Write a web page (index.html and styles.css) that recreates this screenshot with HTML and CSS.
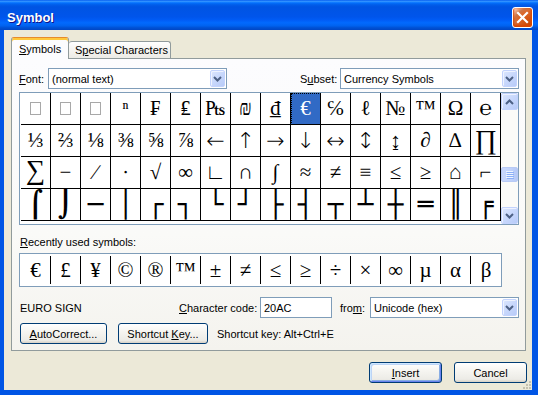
FILE: index.html
```html
<html lang="en">
  <head>
    <meta charset="UTF-8" />
    <title>Symbol</title>
    <link rel="stylesheet" href="styles.css">
  </head>
  <body>
    <div class="window">
      <div class="titlebar">
        <span class="title">Symbol</span>
        <button class="close" aria-label="Close">
          <svg width="19" height="19" viewBox="0 0 19 19"><path d="M5 5 L14 14 M14 5 L5 14" stroke="#fff" stroke-width="2.2" stroke-linecap="square"/></svg>
        </button>
      </div>
      <div class="client">
        <div class="tabs">
          <div class="tab active"><u>S</u>ymbols</div>
          <div class="tab special">S<u>p</u>ecial Characters</div>
        </div>
        <div class="panel">
          <div class="row fonts">
            <span class="lbl-font"><u>F</u>ont:</span>
            <div class="combo font-combo">
              <span class="combo-text">(normal text)</span>
              <span class="drop"><svg width="9" height="6" viewBox="0 0 9 6"><polyline points="1,1 4.5,4.5 8,1" fill="none" stroke="#4d6185" stroke-width="2"/></svg></span>
            </div>
            <span class="lbl-subset">S<u>u</u>bset:</span>
            <div class="combo subset-combo">
              <span class="combo-text">Currency Symbols</span>
              <span class="drop"><svg width="9" height="6" viewBox="0 0 9 6"><polyline points="1,1 4.5,4.5 8,1" fill="none" stroke="#4d6185" stroke-width="2"/></svg></span>
            </div>
          </div>

          <div class="charmap">
            <div class="cells">
              <span class="cell"><i class="missing"></i></span>
              <span class="cell"><i class="missing"></i></span>
              <span class="cell"><i class="missing"></i></span>
              <span class="cell sup">ⁿ</span>
              <span class="cell">₣</span>
              <span class="cell">₤</span>
              <span class="cell">₧</span>
              <span class="cell">₪</span>
              <span class="cell">₫</span>
              <span class="cell selected">€</span>
              <span class="cell">℅</span>
              <span class="cell">ℓ</span>
              <span class="cell">№</span>
              <span class="cell">™</span>
              <span class="cell">Ω</span>
              <span class="cell">℮</span>

              <span class="cell">⅓</span>
              <span class="cell">⅔</span>
              <span class="cell">⅛</span>
              <span class="cell">⅜</span>
              <span class="cell">⅝</span>
              <span class="cell">⅞</span>
              <span class="cell arrow">←</span>
              <span class="cell arrow">↑</span>
              <span class="cell arrow">→</span>
              <span class="cell arrow">↓</span>
              <span class="cell arrow">↔</span>
              <span class="cell arrow">↕</span>
              <span class="cell arrow">↨</span>
              <span class="cell">∂</span>
              <span class="cell">∆</span>
              <span class="cell big">∏</span>

              <span class="cell big sum">∑</span>
              <span class="cell">−</span>
              <span class="cell">∕</span>
              <span class="cell">∙</span>
              <span class="cell">√</span>
              <span class="cell">∞</span>
              <span class="cell">∟</span>
              <span class="cell">∩</span>
              <span class="cell">∫</span>
              <span class="cell">≈</span>
              <span class="cell">≠</span>
              <span class="cell">≡</span>
              <span class="cell">≤</span>
              <span class="cell">≥</span>
              <span class="cell">⌂</span>
              <span class="cell">⌐</span>

              <span class="cell box">⌠</span>
              <span class="cell box">⌡</span>
              <span class="cell box">─</span>
              <span class="cell box">│</span>
              <span class="cell box">┌</span>
              <span class="cell box">┐</span>
              <span class="cell box">└</span>
              <span class="cell box">┘</span>
              <span class="cell box">├</span>
              <span class="cell box">┤</span>
              <span class="cell box">┬</span>
              <span class="cell box">┴</span>
              <span class="cell box">┼</span>
              <span class="cell box">═</span>
              <span class="cell box">║</span>
              <span class="cell box">╒</span>
            </div>
            <div class="vscroll">
              <span class="sbtn"><svg width="9" height="6" viewBox="0 0 9 6"><polyline points="1,5 4.5,1.5 8,5" fill="none" stroke="#4d6185" stroke-width="2"/></svg></span>
              <span class="thumb"><i></i><i></i><i></i><i></i></span>
              <span class="sbtn down"><svg width="9" height="6" viewBox="0 0 9 6"><polyline points="1,1 4.5,4.5 8,1" fill="none" stroke="#4d6185" stroke-width="2"/></svg></span>
            </div>
          </div>

          <div class="recent-label"><u>R</u>ecently used symbols:</div>
          <div class="recent">
            <span class="rcell">€</span>
            <span class="rcell">£</span>
            <span class="rcell">¥</span>
            <span class="rcell">©</span>
            <span class="rcell">®</span>
            <span class="rcell">™</span>
            <span class="rcell">±</span>
            <span class="rcell">≠</span>
            <span class="rcell">≤</span>
            <span class="rcell">≥</span>
            <span class="rcell">÷</span>
            <span class="rcell">×</span>
            <span class="rcell">∞</span>
            <span class="rcell">µ</span>
            <span class="rcell">α</span>
            <span class="rcell">β</span>
          </div>

          <div class="row info">
            <span class="charname">EURO SIGN</span>
            <span class="lbl-code"><u>C</u>haracter code:</span>
            <span class="code-input">20AC</span>
            <span class="lbl-from">fro<u>m</u>:</span>
            <div class="combo from-combo">
              <span class="combo-text">Unicode (hex)</span>
              <span class="drop"><svg width="9" height="6" viewBox="0 0 9 6"><polyline points="1,1 4.5,4.5 8,1" fill="none" stroke="#4d6185" stroke-width="2"/></svg></span>
            </div>
          </div>

          <div class="row actions">
            <button class="btn autocorrect"><u>A</u>utoCorrect...</button>
            <button class="btn shortcut">Shortcut <u>K</u>ey...</button>
            <span class="shortcut-text">Shortcut key: Alt+Ctrl+E</span>
          </div>
        </div>

        <div class="footer">
          <button class="btn wide default"><u>I</u>nsert</button>
          <button class="btn wide">Cancel</button>
        </div>

        <svg class="grip" width="10" height="10" viewBox="0 0 10 10">
          <g fill="#c4c1b0">
            <rect x="7" y="1" width="2" height="2"/>
            <rect x="4" y="4" width="2" height="2"/><rect x="7" y="4" width="2" height="2"/>
            <rect x="1" y="7" width="2" height="2"/><rect x="4" y="7" width="2" height="2"/><rect x="7" y="7" width="2" height="2"/>
          </g>
        </svg>
      </div>
    </div>
  </body>
</html>
```

FILE: styles.css
```css
* {
  box-sizing: border-box;
}

body {
  margin: 0;
  font-family: "Liberation Sans", Arial, sans-serif;
  font-size: 11px;
  color: #000;
  background: #fff;
}

u {
  text-decoration-thickness: 1px;
  text-underline-offset: 1px;
}

.window {
  width: 538px;
  height: 395px;
  display: flex;
  flex-direction: column;
}

/* title bar */
.titlebar {
  height: 30px;
  flex: none;
  display: flex;
  align-items: center;
  padding: 4px 6px 0 7px;
  background: linear-gradient(180deg, #0058ee 0%, #3593ff 4%, #288eff 6%, #127dff 8%, #036ffc 10%, #0262ee 14%, #0057e5 20%, #0054e3 24%, #0055eb 56%, #005bf5 66%, #026afe 76%, #0062ef 86%, #0052d6 92%, #0046c4 100%);
}

.title {
  flex: 1;
  color: #fff;
  font: bold 13px "Liberation Sans", Arial, sans-serif;
  text-shadow: 1px 1px #0f1089;
}

.close {
  width: 21px;
  height: 21px;
  padding: 0;
  margin-right: -1px;
  border: 1px solid #fff;
  border-radius: 3px;
  background: radial-gradient(circle at 90% 90%, #cc4600 0%, #dc6527 55%, #cd7546 70%, #ffccb2 90%, #fff 100%);
  box-shadow: inset 0 -1px 2px 1px #da4600;
  display: flex;
  align-items: center;
  justify-content: center;
}

/* dialog body */
.client {
  flex: 1;
  position: relative;
  background: #ece9d8;
  border-style: solid;
  border-color: #0055e5;
  border-width: 0 6px 5px 4px;
  padding: 7px 6px 0 7px;
}

.tabs {
  display: flex;
  align-items: flex-end;
  height: 21px;
}

.tab {
  height: 17px;
  display: flex;
  align-items: center;
  border: 1px solid #919b9c;
  border-bottom: none;
  border-radius: 3px 3px 0 0;
  background: linear-gradient(180deg, #fff 0%, #f3f2ee 60%, #ecebe6 100%);
}

.tab.special {
  width: 102px;
  padding-left: 6px;
  border-left: none;
}

.tab.active {
  width: 58px;
  height: 22px;
  margin-bottom: -1px;
  padding: 1px 0 0 7px;
  position: relative;
  z-index: 1;
  border-top: 1px solid #e68b2c;
  background: #fcfcfe;
  box-shadow: inset 0 2px #ffc83c;
}

.panel {
  height: 293px;
  border: 1px solid #919b9c;
  background: linear-gradient(180deg, #fcfcfe 0%, #fafaf8 60%, #f4f3ee 100%);
  padding: 9px 5px 6px 7px;
}

.row {
  display: flex;
  align-items: center;
  height: 21px;
}

.lbl-font {
  width: 29px;
}

.lbl-subset {
  width: 40px;
  margin-left: 73px;
}

.combo {
  height: 21px;
  display: flex;
  align-items: center;
  border: 1px solid #7f9db9;
  background: #fff;
  padding: 1px;
}

.font-combo,
.subset-combo {
  width: 179px;
}

.from-combo {
  width: 149px;
}

.combo-text {
  flex: 1;
  padding-left: 2px;
}

.drop,
.sbtn {
  width: 15px;
  height: 17px;
  display: flex;
  align-items: center;
  justify-content: center;
  border: 1px solid #c3d3fd;
  border-radius: 2px;
  background: linear-gradient(135deg, #dce6fd 0%, #c8d8fc 50%, #b8cbf8 100%);
  box-shadow: inset 1px 1px #eef3ff;
}

/* character map */
.charmap {
  margin-top: 3px;
  width: 500px;
  height: 133px;
  display: flex;
  border: 1px solid #7f9db9;
  background: #fff;
}

.cells {
  margin-left: 1px;
  display: grid;
  grid-template-columns: repeat(16, 30px);
  grid-auto-rows: 32px;
  align-self: flex-start;
}

.cell,
.rcell {
  display: flex;
  align-items: center;
  justify-content: center;
  font-family: "Liberation Serif", "DejaVu Serif", serif;
  font-size: 21px;
  line-height: 1;
}

.cell {
  border-right: 1px solid #000;
  border-bottom: 1px solid #000;
}

.cell.sup {
  align-items: flex-start;
  padding-top: 5px;
  font-size: 19px;
}

.cell.arrow {
  font-family: "DejaVu Sans", sans-serif;
  font-size: 22px;
  font-weight: 300;
}

.cell.big {
  font-size: 27px;
}

.cell.sum {
  padding-bottom: 5px;
}

.cell.box {
  font-family: "DejaVu Sans Mono", monospace;
  font-size: 26px;
  font-weight: bold;
  line-height: 31px;
}

.cell.selected {
  background: #316ac5;
  color: #fff;
  outline: 1px dotted #000;
  outline-offset: -1px;
}

.missing {
  width: 11px;
  height: 13px;
  border: 1px solid #a8a8a8;
}

.vscroll {
  width: 17px;
  display: flex;
  flex-direction: column;
  background: #fbfbf8;
}

.sbtn {
  width: 17px;
  height: 17px;
}

.sbtn.down {
  margin-top: auto;
}

.thumb {
  margin-top: 57px;
  height: 15px;
  display: flex;
  flex-direction: column;
  align-items: center;
  justify-content: center;
  gap: 1px;
  border: 1px solid #b8caf5;
  border-radius: 2px;
  background: linear-gradient(90deg, #cad8fb 0%, #c1d3fb 50%, #b6c9f7 100%);
}

.thumb i {
  width: 7px;
  height: 1px;
  background: #eef4fe;
  box-shadow: 1px 1px #8cb0f8;
}

.recent-label {
  margin-top: 11px;
  height: 13px;
  line-height: 13px;
  padding-left: 1px;
}

.recent {
  margin-top: 4px;
  width: 483px;
  height: 34px;
  display: flex;
  padding: 2px 0 2px 1px;
  border: 1px solid #7f9db9;
  background: #fff;
}

.rcell {
  width: 30px;
  height: 28px;
  border-right: 1px solid #000;
}

.rcell:last-child {
  border-right: none;
}

.info {
  margin-top: 10px;
}

.charname {
  width: 160px;
  padding-left: 1px;
}

.lbl-code {
  width: 81px;
}

.code-input {
  width: 72px;
  height: 21px;
  display: flex;
  align-items: center;
  padding-left: 3px;
  border: 1px solid #7f9db9;
  background: #fff;
}

.lbl-from {
  width: 30px;
  margin-left: 8px;
}

.actions {
  margin-top: 5px;
}

.btn {
  height: 21px;
  padding: 0;
  font: inherit;
  color: #000;
  border: 1px solid #003c74;
  border-radius: 3px;
  background: linear-gradient(180deg, #fff 0%, #f6f5f1 40%, #ecebe6 86%, #d6d0c5 100%);
}

.autocorrect {
  width: 87px;
  margin-left: 1px;
}

.shortcut {
  width: 90px;
  margin-left: 11px;
}

.shortcut-text {
  margin-left: 9px;
}

.footer {
  margin-top: 11px;
  margin-right: -1px;
  display: flex;
  justify-content: flex-end;
  gap: 12px;
}

.btn.wide {
  width: 73px;
}

.btn.default {
  box-shadow: inset 1px 1px #cee7ff, inset -1px -1px #6982ee, inset 2px 2px #bcd4f6, inset -2px -2px #89ade4;
}

.grip {
  position: absolute;
  right: 0;
  bottom: 0;
}
```
